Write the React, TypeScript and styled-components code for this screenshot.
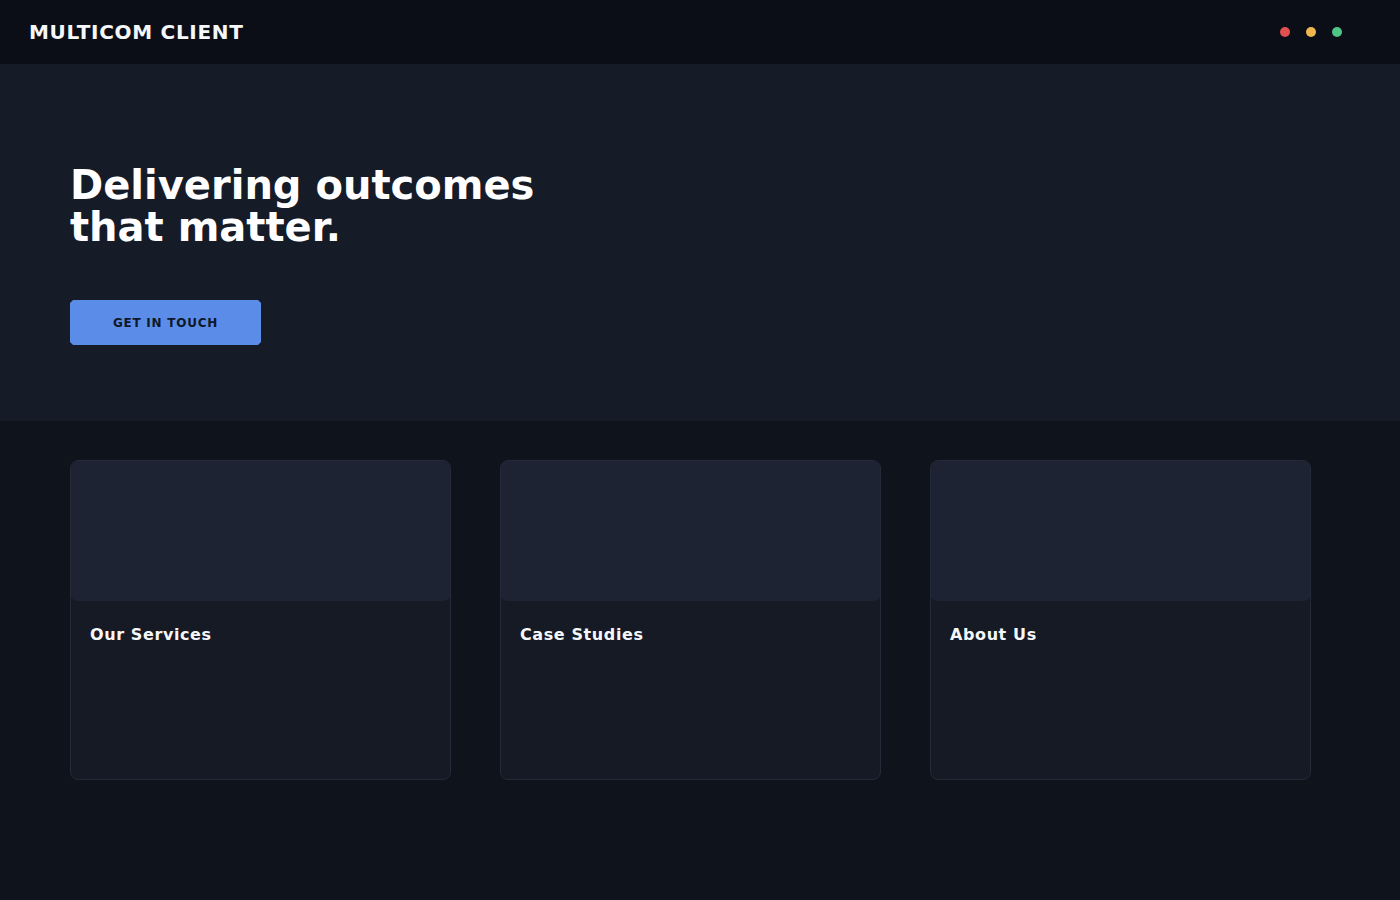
import styled, { createGlobalStyle } from "styled-components";

const GlobalStyle = createGlobalStyle`
  html, body {
    margin: 0;
    padding: 0;
    background: #0f131b;
    font-family: "DejaVu Sans", "Liberation Sans", sans-serif;
  }
  * { box-sizing: border-box; }
`;

const Page = styled.div`
  min-height: 900px;
  background: #0f131b;
`;

const Header = styled.header`
  height: 64px;
  background: #0b0e16;
  display: flex;
  align-items: center;
  justify-content: space-between;
  padding: 0 58px 0 29px;
`;

const Brand = styled.div`
  color: #f5f7fa;
  font-size: 20px;
  font-weight: 700;
  letter-spacing: 0.7px;
`;

const Dots = styled.div`
  display: flex;
  gap: 16px;
`;

const Dot = styled.span<{ $color: string }>`
  width: 10px;
  height: 10px;
  border-radius: 50%;
  background: ${(p) => p.$color};
`;

const Hero = styled.section`
  height: 357px;
  background: #151b27;
  padding: 100px 70px 0;
`;

const Title = styled.h1`
  margin: 0;
  color: #ffffff;
  font-size: 40px;
  line-height: 42px;
  font-weight: 700;
`;

const CtaButton = styled.button`
  display: block;
  margin-top: 52px;
  width: 191px;
  height: 45px;
  border: none;
  background: #5b8de8;
  color: #0f172a;
  font-family: inherit;
  font-size: 12px;
  font-weight: 700;
  letter-spacing: 0.75px;
  cursor: pointer;
  clip-path: polygon(
    3px 0,
    calc(100% - 3px) 0,
    100% 3px,
    100% calc(100% - 3px),
    calc(100% - 3px) 100%,
    3px 100%,
    0 calc(100% - 3px),
    0 3px
  );
`;

const Cards = styled.section`
  display: grid;
  grid-template-columns: repeat(3, 381px);
  gap: 49px;
  padding: 39px 70px;
`;

const Card = styled.div`
  height: 320px;
  background: #151a25;
  border: 1px solid #232a38;
  border-radius: 8px;
  overflow: hidden;
`;

const CardMedia = styled.div`
  height: 141px;
  margin: -1px -1px 0;
  background: #1d2332;
  border-radius: 8px;
`;

const CardTitle = styled.h3`
  margin: 0;
  padding: 24px 19px;
  color: #f5f7fa;
  font-size: 16px;
  font-weight: 700;
  letter-spacing: 0.6px;
`;

const cards = ["Our Services", "Case Studies", "About Us"];

export default function App() {
  return (
    <Page>
      <GlobalStyle />
      <Header>
        <Brand>MULTICOM CLIENT</Brand>
        <Dots>
          <Dot $color="#e0504f" />
          <Dot $color="#f0b74f" />
          <Dot $color="#4fc487" />
        </Dots>
      </Header>
      <Hero>
        <Title>
          Delivering outcomes
          <br />
          that matter.
        </Title>
        <CtaButton>GET IN TOUCH</CtaButton>
      </Hero>
      <Cards>
        {cards.map((c) => (
          <Card key={c}>
            <CardMedia />
            <CardTitle>{c}</CardTitle>
          </Card>
        ))}
      </Cards>
    </Page>
  );
}
